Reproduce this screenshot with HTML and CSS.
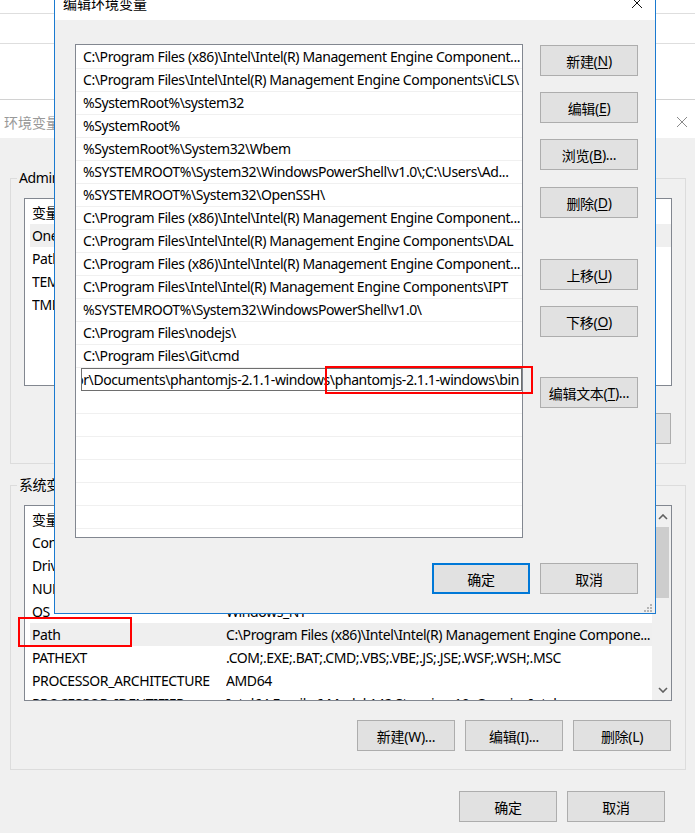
FILE: index.html
```html
<!DOCTYPE html>
<html lang="zh-CN">
<head>
<meta charset="utf-8">
<title>编辑环境变量</title>
<link rel="stylesheet" href="styles.css">
</head>
<body>
<div class="desktop">
  <div class="backdrop">
    <div class="bd-row bd-r1"></div>
    <div class="bd-row bd-r2"></div>
    <div class="bd-row bd-r3"></div>
  </div>

  <div class="envwin">
    <div class="env-title">
      <span class="env-title-text">环境变量</span>
      <svg class="env-close" width="12" height="12" viewBox="0 0 12 12"><path d="M1 1L11 11M11 1L1 11" stroke="#8a8a8a" stroke-width="1" fill="none"/></svg>
    </div>
    <div class="envbody">
      <fieldset class="group group-user">
        <legend>Administrator 的用户变量</legend>
        <div class="listview lv-user">
          <div class="lv-content">
            <div class="lv-row lv-head"><span class="c1">变量</span><span class="c2"></span></div>
            <div class="lv-row sel"><span class="c1">OneDrive</span><span class="c2"></span></div>
            <div class="lv-row"><span class="c1">Path</span><span class="c2"></span></div>
            <div class="lv-row"><span class="c1">TEMP</span><span class="c2"></span></div>
            <div class="lv-row"><span class="c1">TMP</span><span class="c2"></span></div>
          </div>
        </div>
        <div class="btnrow">
          <button class="btn"></button>
          <button class="btn"></button>
          <button class="btn"></button>
        </div>
      </fieldset>

      <fieldset class="group group-sys">
        <legend>系统变量</legend>
        <div class="listview lv-sys">
          <div class="lv-content">
            <div class="lv-row lv-head"><span class="c1">变量</span><span class="c2"></span></div>
            <div class="lv-row"><span class="c1">ComSpec</span><span class="c2"></span></div>
            <div class="lv-row"><span class="c1">DriverData</span><span class="c2"></span></div>
            <div class="lv-row"><span class="c1">NUMBER_OF_PROCESSORS</span><span class="c2"></span></div>
            <div class="lv-row"><span class="c1">OS</span><span class="c2">Windows_NT</span></div>
            <div class="lv-row sel"><span class="c1">Path</span><span class="c2">C:\Program Files (x86)\Intel\Intel(R) Management Engine Compone...</span></div>
            <div class="lv-row"><span class="c1">PATHEXT</span><span class="c2">.COM;.EXE;.BAT;.CMD;.VBS;.VBE;.JS;.JSE;.WSF;.WSH;.MSC</span></div>
            <div class="lv-row"><span class="c1">PROCESSOR_ARCHITECTURE</span><span class="c2">AMD64</span></div>
            <div class="lv-row"><span class="c1">PROCESSOR_IDENTIFIER</span><span class="c2">Intel64 Family 6 Model 142 Stepping 10, GenuineIntel</span></div>
          </div>
          <div class="vscroll">
            <div class="sb-arrow"><svg width="10" height="6" viewBox="0 0 10 6"><path d="M1 5L5 1L9 5" stroke="#606060" stroke-width="1.6" fill="none"/></svg></div>
            <div class="sb-thumb"></div>
            <div class="sb-track"></div>
            <div class="sb-arrow"><svg width="10" height="6" viewBox="0 0 10 6"><path d="M1 1L5 5L9 1" stroke="#606060" stroke-width="1.6" fill="none"/></svg></div>
          </div>
        </div>
        <div class="btnrow">
          <button class="btn">新建(W)...</button>
          <button class="btn">编辑(I)...</button>
          <button class="btn">删除(L)</button>
        </div>
      </fieldset>

      <div class="env-actions">
        <button class="btn">确定</button>
        <button class="btn">取消</button>
      </div>
    </div>
  </div>

  <div class="editwin">
    <div class="edit-title">
      <span class="edit-title-text">编辑环境变量</span>
      <svg class="edit-close" width="12" height="12" viewBox="0 0 12 12"><path d="M1 1L11 11M11 1L1 11" stroke="#111" stroke-width="1" fill="none"/></svg>
    </div>
    <div class="edit-body">
      <div class="edit-main">
        <div class="pathlist">
          <div class="pl-row">C:\Program Files (x86)\Intel\Intel(R) Management Engine Component...</div>
          <div class="pl-row">C:\Program Files\Intel\Intel(R) Management Engine Components\iCLS\</div>
          <div class="pl-row">%SystemRoot%\system32</div>
          <div class="pl-row">%SystemRoot%</div>
          <div class="pl-row">%SystemRoot%\System32\Wbem</div>
          <div class="pl-row">%SYSTEMROOT%\System32\WindowsPowerShell\v1.0\;C:\Users\Ad...</div>
          <div class="pl-row">%SYSTEMROOT%\System32\OpenSSH\</div>
          <div class="pl-row">C:\Program Files (x86)\Intel\Intel(R) Management Engine Component...</div>
          <div class="pl-row">C:\Program Files\Intel\Intel(R) Management Engine Components\DAL</div>
          <div class="pl-row">C:\Program Files (x86)\Intel\Intel(R) Management Engine Component...</div>
          <div class="pl-row">C:\Program Files\Intel\Intel(R) Management Engine Components\IPT</div>
          <div class="pl-row">%SYSTEMROOT%\System32\WindowsPowerShell\v1.0\</div>
          <div class="pl-row">C:\Program Files\nodejs\</div>
          <div class="pl-row">C:\Program Files\Git\cmd</div>
          <div class="pl-row pl-editing"><div class="pl-edit"><span class="pl-edit-text">C:\Users\Administrator\Documents\phantomjs-2.1.1-windows\phantomjs-2.1.1-windows\bin</span></div></div>
          <div class="pl-row"></div>
          <div class="pl-row"></div>
          <div class="pl-row"></div>
          <div class="pl-row"></div>
          <div class="pl-row"></div>
          <div class="pl-row"></div>
          <div class="pl-row"></div>
          <div class="pl-row"></div>
        </div>
        <div class="side-btns">
          <button class="btn sb-new">新建(<u>N</u>)</button>
          <button class="btn sb-edit">编辑(<u>E</u>)</button>
          <button class="btn sb-browse">浏览(<u>B</u>)...</button>
          <button class="btn sb-del">删除(<u>D</u>)</button>
          <button class="btn sb-up">上移(<u>U</u>)</button>
          <button class="btn sb-down">下移(<u>O</u>)</button>
          <button class="btn sb-text">编辑文本(<u>T</u>)...</button>
        </div>
      </div>
      <div class="edit-actions">
        <button class="btn btn-default">确定</button>
        <button class="btn">取消</button>
      </div>
    </div>
    <svg class="grip" width="9" height="9" viewBox="0 0 9 9">
      <rect x="7" y="1" width="2" height="2" fill="#b4b4b4"/>
      <rect x="4" y="4" width="2" height="2" fill="#b4b4b4"/>
      <rect x="7" y="4" width="2" height="2" fill="#b4b4b4"/>
      <rect x="1" y="7" width="2" height="2" fill="#b4b4b4"/>
      <rect x="4" y="7" width="2" height="2" fill="#b4b4b4"/>
      <rect x="7" y="7" width="2" height="2" fill="#b4b4b4"/>
    </svg>
  </div>

  <div class="mark mark-edit"></div>
  <div class="mark mark-path"></div>
</div>
</body>
</html>
```

FILE: styles.css
```css
* { box-sizing: border-box; }
html, body { margin: 0; padding: 0; }
body { width: 695px; height: 833px; overflow: hidden; background: #fff; }

.desktop {
  position: relative;
  width: 695px;
  height: 833px;
  overflow: hidden;
  background: #fff;
  font-family: "Noto Sans", "Noto Sans CJK SC", sans-serif;
  font-size: 14px;
  letter-spacing: -0.4px;
  color: #000;
}

/* window far behind */
.backdrop { height: 99px; background: #fff; }
.bd-r1 { height: 14px; border-bottom: 1px solid #dedede; }
.bd-r2 { height: 30px; border-bottom: 1px solid #dedede; }
.bd-r3 { height: 55px; }

/* 环境变量 window */
.envwin { border-top: 1px solid #d2d2d2; }
.env-title {
  height: 38px;
  background: #fff;
  display: flex;
  align-items: center;
  padding: 6px 7px 0 4px;
}
.env-title-text { color: #999; font-size: 14px; letter-spacing: 0; }
.env-close { margin-left: auto; }

.envbody {
  background: #f0f0f0;
  height: 695px;
  padding-top: 30px;
}

.group {
  margin: 0 9px 0 10px;
  padding: 10px 13px 19px;
  border: 1px solid #dcdcdc;
  min-width: 0;
}
.group legend {
  padding: 0 2px;
  margin-left: -7px;
  line-height: 20px;
  height: 20px;
}
.group-sys { margin-top: 11px; padding-bottom: 18px; }

.listview {
  background: #fff;
  border: 1px solid #828790;
  display: flex;
  overflow: hidden;
}
.lv-user { height: 188px; }
.lv-sys { height: 196px; }
.lv-content {
  flex: 1;
  min-width: 0;
  padding: 1px 0 0 5px;
  overflow: hidden;
}
.lv-row {
  height: 23px;
  display: flex;
  align-items: center;
  padding-left: 2px;
  white-space: nowrap;
}
.lv-row.lv-head { height: 24px; }
.lv-row.sel { background: #efefef; }
.c1 { width: 194px; flex-shrink: 0; overflow: hidden; }
.c2 { flex: 1; overflow: hidden; }

.vscroll {
  width: 19px;
  flex-shrink: 0;
  background: #f0f0f0;
  display: flex;
  flex-direction: column;
}
.sb-arrow {
  height: 21px;
  display: flex;
  align-items: center;
  justify-content: center;
  padding-left: 2px;
}
.sb-thumb { height: 71px; margin: 0 2px 0 4px; background: #cdcdcd; }
.sb-track { flex: 1; }

.btnrow {
  display: flex;
  justify-content: flex-end;
  gap: 10px;
  margin-top: 27px;
  margin-right: 1px;
}
.group-sys .btnrow { margin-top: 19px; }

.btn {
  width: 98px;
  height: 31px;
  background: #e1e1e1;
  border: 1px solid #adadad;
  font-family: inherit;
  font-size: 14px;
  letter-spacing: -0.3px;
  color: #000;
  padding: 0;
  margin: 0;
  display: flex;
  align-items: center;
  justify-content: center;
}
.btn u { text-decoration: underline; text-underline-offset: 2px; }

.env-actions {
  display: flex;
  justify-content: flex-end;
  gap: 10px;
  margin-top: 21px;
  padding-right: 30px;
}

/* 编辑环境变量 dialog (floats over the other window) */
.editwin {
  position: absolute;
  left: 54px;
  top: -16px;
  width: 602px;
  height: 630px;
  border: 1px solid #1a7ad0;
  background: #f0f0f0;
  display: flex;
  flex-direction: column;
}
.edit-title {
  height: 35px;
  background: #fff;
  display: flex;
  align-items: center;
  padding: 0 12px 0 8px;
  flex-shrink: 0;
}
.edit-title-text { letter-spacing: 0; }
.edit-close { margin-left: auto; }

.edit-body {
  flex: 1;
  padding: 24px 17px 0 20px;
  position: relative;
}
.edit-main {
  display: flex;
  gap: 17px;
}
.pathlist {
  width: 448px;
  height: 494px;
  background: #fff;
  border: 1px solid #828790;
  padding-top: 1px;
  overflow: hidden;
}
.pl-row {
  height: 23px;
  border-bottom: 1px solid #f0f0f0;
  padding-left: 7px;
  line-height: 22px;
  white-space: nowrap;
  overflow: hidden;
}
.pl-row.pl-editing { padding-left: 5px; border-bottom: 0; }
.pl-edit {
  height: 23px;
  border: 1px solid #6e6e6e;
  background: #fff;
  display: flex;
  justify-content: flex-end;
  align-items: center;
  overflow: hidden;
  padding-right: 2px;
}
.pl-edit-text { flex-shrink: 0; white-space: nowrap; }

.side-btns { display: flex; flex-direction: column; }
.sb-new { margin-top: 1px; }
.sb-edit, .sb-browse, .sb-down { margin-top: 16px; }
.sb-del { margin-top: 17px; }
.sb-up { margin-top: 41px; }
.sb-text { margin-top: 40px; }

.edit-actions {
  display: flex;
  justify-content: flex-end;
  gap: 10px;
  margin-top: 25px;
}
.btn-default { border: 2px solid #0078d7; }

.grip { position: absolute; right: 3px; bottom: 1px; }

/* red annotation rectangles drawn over the screenshot */
.mark { position: absolute; border: 2px solid #ff0000; }
.mark-edit { left: 325px; top: 366px; width: 208px; height: 28px; }
.mark-path { left: 18px; top: 617px; width: 114px; height: 30px; }
```
